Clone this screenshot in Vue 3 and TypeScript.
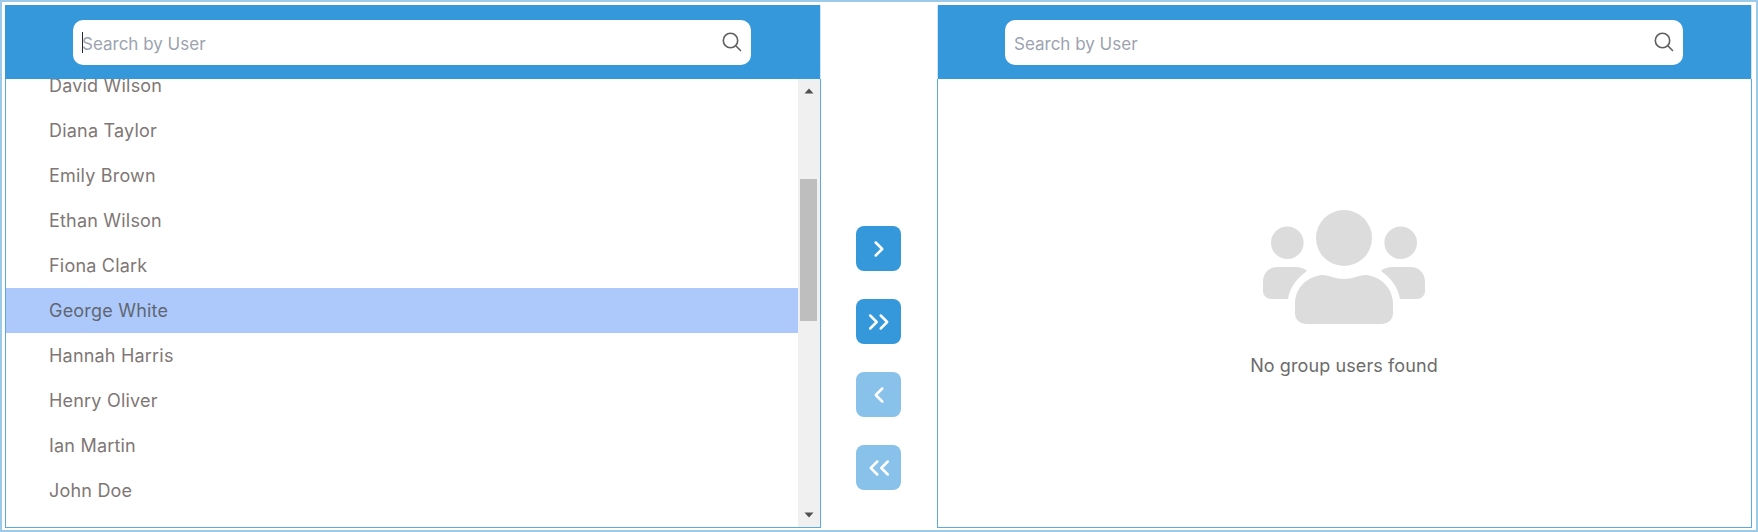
<script setup lang="ts">
import { onMounted, ref } from 'vue'

const users: string[] = [
  'Alice Johnson', 'Bob Smith', 'Charlie Davis', 'David Wilson', 'Diana Taylor', 'Emily Brown',
  'Ethan Wilson', 'Fiona Clark', 'George White', 'Hannah Harris', 'Henry Oliver', 'Ian Martin',
  'John Doe', 'Julia Adams',
]
const listEl = ref<HTMLElement | null>(null)
onMounted(() => {
  if (listEl.value) listEl.value.scrollTop = 151
})
</script>

<template>
  <div class="frame">
    <section class="panel left">
      <header class="head">
        <div class="search">
          <span class="caret"></span>
          <span class="ph">Search by User</span>
          <svg class="lens" viewBox="0 0 20 20" fill="none" stroke="#5f5f5f" stroke-width="1.6">
            <circle cx="8.5" cy="8.5" r="7.2" />
            <path d="M13.8 13.8l4.7 4.7" stroke-linecap="round" />
          </svg>
        </div>
      </header>
      <div class="box body">
        <ul ref="listEl" class="list">
          <li v-for="u in users" :key="u" class="item" :class="{ sel: u === 'George White' }">{{ u }}</li>
        </ul>
        <div class="bar">
          <svg class="arrow" viewBox="0 0 10 6"><path d="M0.5 5.5L5 0.5l4.5 5z" fill="#505050" /></svg>
          <div class="track"><div class="thumb"></div></div>
          <svg class="arrow" viewBox="0 0 10 6"><path d="M0.5 0.5L5 5.5l4.5-5z" fill="#505050" /></svg>
        </div>
      </div>
    </section>

    <div class="actions">
      <button class="btn">
        <svg viewBox="0 0 24 24"><path d="M8.7 5.5L15.2 12l-6.5 6.5" /></svg>
      </button>
      <button class="btn">
        <svg viewBox="0 0 24 24"><path d="M3.2 5.5L9.7 12l-6.5 6.5M13.7 5.5L20.2 12l-6.5 6.5" /></svg>
      </button>
      <button class="btn off">
        <svg viewBox="0 0 24 24"><path d="M15.3 5.5L8.8 12l6.5 6.5" /></svg>
      </button>
      <button class="btn off">
        <svg viewBox="0 0 24 24"><path d="M10.3 5.5L3.8 12l6.5 6.5M20.8 5.5L14.3 12l6.5 6.5" /></svg>
      </button>
    </div>

    <section class="panel right">
      <header class="head">
        <div class="search">
          <span class="ph">Search by User</span>
          <svg class="lens" viewBox="0 0 20 20" fill="none" stroke="#5f5f5f" stroke-width="1.6">
            <circle cx="8.5" cy="8.5" r="7.2" />
            <path d="M13.8 13.8l4.7 4.7" stroke-linecap="round" />
          </svg>
        </div>
      </header>
      <div class="box empty">
        <svg class="group" viewBox="0 0 162 114" fill="#dcdcdc">
          <circle cx="81" cy="28" r="28" />
          <circle cx="24.3" cy="32.7" r="16.3" />
          <circle cx="137.7" cy="32.7" r="16.3" />
          <path d="M32 94C32 78 44 66 60 65C66 65 72 69 81 69C90 69 96 65 102 65C118 66 130 78 130 94V103C130 110 125 114 118 114H44C37 114 32 110 32 103Z" />
          <path d="M15 57H32C37 57 41 58 44 61C34 68 27 77 25 89H8C3 89 0 85 0 81V72C0 63 6 57 15 57Z" />
          <path d="M147 57H130C125 57 121 58 118 61C128 68 135 77 137 89H154C159 89 162 85 162 81V72C162 63 156 57 147 57Z" />
        </svg>
        <p class="msg">No group users found</p>
      </div>
    </section>
  </div>
</template>

<style>
html, body { margin: 0; background: #fff; }
</style>

<style scoped>
.frame {
  box-sizing: border-box;
  width: 1758px;
  height: 532px;
  border: 2px solid #9ccbea;
  padding: 3px 4px 2px 3px;
  display: flex;
  font-family: Inter, "Liberation Sans", sans-serif;
  background: #fff;
}
.panel {
  min-width: 0;
  display: flex;
  flex-direction: column;
}
.left { width: 816px; flex: none; }
.right { flex: 1 1 0; }
.head {
  box-sizing: border-box;
  height: 74px;
  flex: none;
  padding: 15px 1px 0 0;
  background: #3498db;
  display: flex;
  align-items: flex-start;
  justify-content: center;
}
.left .head { border-right: 1px solid #cfe5f5; }
.right .head { border-left: 1px solid #cfe5f5; border-right: 1px solid #cfe5f5; }
.box {
  flex: 1;
  min-height: 0;
  border: 1px solid #5aa9e0;
  border-top: 0;
}
.search {
  box-sizing: border-box;
  width: 678px;
  height: 45px;
  border-radius: 10px;
  background: #fff;
  display: flex;
  align-items: center;
  padding: 2px 9px 0 9px;
  position: relative;
}
.caret {
  position: absolute;
  left: 9px;
  top: 12px;
  width: 1px;
  height: 21px;
  background: #1f2d3d;
}
.ph {
  flex: 1;
  font-size: 17px;
  color: #9ca3af;
}
.lens { width: 20px; height: 20px; margin-top: -3px; }
.body { display: flex; }
.list {
  flex: 1;
  margin: 0;
  padding: 0;
  list-style: none;
  overflow-y: auto;
  scrollbar-width: none;
}
.item {
  height: 45px;
  box-sizing: border-box;
  padding-left: 43px;
  display: flex;
  align-items: center;
  font-size: 18px;
  letter-spacing: 0.2px;
  color: #7f7775;
}
.sel { background: #adc9fb; color: #5f6672; }
.bar {
  width: 22px;
  flex: none;
  background: #f0f0f0;
  display: flex;
  flex-direction: column;
  align-items: center;
}
.arrow { width: 10px; height: 6px; margin: 9px 0; flex: none; }
.track { flex: 1; width: 100%; padding: 0 3px 0 2px; box-sizing: border-box; }
.thumb { height: 142px; margin-top: 76px; background: #bebebe; }
.actions {
  box-sizing: border-box;
  width: 116px;
  flex: none;
  display: flex;
  flex-direction: column;
  align-items: center;
  padding: 221px 1px 0 0;
  gap: 28px;
}
.btn {
  width: 45px;
  height: 45px;
  padding: 0;
  border: 0;
  border-radius: 8px;
  background: #3498db;
  display: flex;
  align-items: center;
  justify-content: center;
}
.btn.off { background: #88c2ea; }
.btn svg {
  width: 24px;
  height: 24px;
  fill: none;
  stroke: #fff;
  stroke-width: 2.5;
  stroke-linecap: round;
  stroke-linejoin: round;
}
.empty {
  display: flex;
  flex-direction: column;
  align-items: center;
  padding: 131px 1px 0 0;
}
.group { width: 162px; height: 114px; flex: none; }
.msg { margin: 31px 0 0; font-size: 18px; letter-spacing: 0.1px; color: #6b6b6b; }
</style>
